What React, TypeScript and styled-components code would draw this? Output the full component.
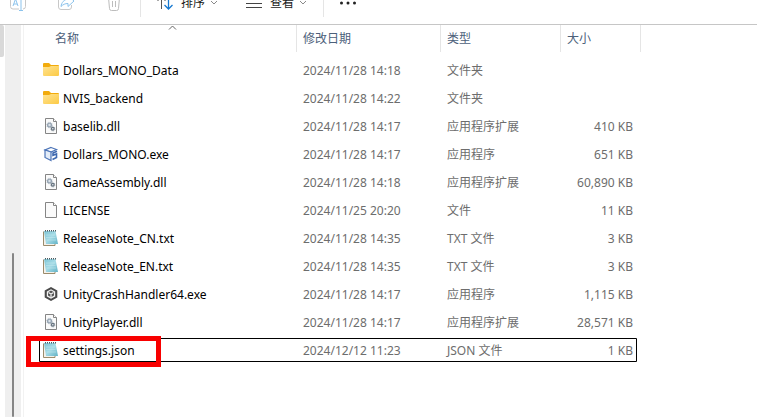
import React from 'react';
import styled, { createGlobalStyle, css } from 'styled-components';

const Global = createGlobalStyle`
  * { box-sizing: border-box; }
  body {
    margin: 0;
    background: #fff;
    color: #000;
    font: 12px/16px "Noto Sans", "Noto Sans CJK SC", sans-serif;
  }
  button { font: inherit; color: inherit; background: none; border: 0; padding: 0; }
  svg { display: block; flex: none; }
`;

const Page = styled.div`
  display: flex;
  flex-direction: column;
  height: 100vh;
  overflow: hidden;
`;

const Toolbar = styled.header`
  display: flex;
  align-items: flex-end;
  flex: none;
  height: 25px;
  overflow: hidden;
  border-bottom: 1px solid #c6c6c6;
`;

const Commands = styled.div`
  display: flex;
  align-items: center;
  flex: none;
  height: 42px;
  padding-left: 9px;
`;

const IconCommand = styled.button`
  width: 18px;
  height: 18px;
  margin-right: 30px;
`;

const Separator = styled.span<{ $before: number }>`
  width: 1px;
  height: 28px;
  margin-left: ${p => p.$before}px;
  margin-right: 15px;
  background: #e5e5e5;
`;

const MenuCommand = styled.button<{ $after?: number }>`
  display: flex;
  align-items: center;
  gap: 5px;
  margin-right: ${p => p.$after ?? 0}px;
  white-space: nowrap;
  color: #1a1a1a;
`;

const CommandLabel = styled.span`
  padding-left: 2px;
`;

const Body = styled.div`
  display: flex;
  flex: 1;
  min-height: 0;
`;

const Nav = styled.aside`
  display: flex;
  flex: none;
  width: 24px;
  border-right: 1px solid #f2f2f2;
`;

const NavItem = styled.div`
  flex: none;
  width: 4px;
  height: 32px;
  margin-right: 1px;
  border-radius: 0 2px 2px 0;
  background: #d9d9d9;
`;

const Track = styled.div`
  width: 16px;
  padding: 228px 7px 0;
  background: #efefef;
`;

const Thumb = styled.div`
  width: 2px;
  height: 100%;
  border-radius: 1px;
  background: #858585;
`;

const Content = styled.main`
  flex: 1;
  min-width: 0;
  padding-left: 15px;
`;

const Files = styled.table`
  display: block;
`;

const Section = styled.tbody`
  display: block;
  padding-top: 6px;
`;

const Head = styled.thead`
  display: block;
`;

const columns = css`
  display: grid;
  grid-template-columns: 258px 144px 120px 80px;
  align-items: center;
`;

const HeadRow = styled.tr`
  ${columns}
`;

const HeadCell = styled.th`
  position: relative;
  height: 27px;
  padding: 6px 0 0 6px;
  border-right: 1px solid #e5e5e5;
  text-align: left;
  font-weight: 400;
  color: #4c607a;
  &:first-child { padding-left: 16px; }
`;

const SortMark = styled.svg`
  position: absolute;
  top: 0;
  left: 129px;
`;

const FileRow = styled.tr<{ $focused?: boolean }>`
  ${columns}
  position: relative;
  width: 598px;
  height: 24px;
  margin-bottom: 4px;
  box-shadow: ${p => (p.$focused ? 'inset 0 0 0 1px #000' : 'none')};
  border-radius: 1px;
`;

const NameCell = styled.td`
  display: flex;
  align-items: center;
  gap: 4px;
  padding: 0 0 0 4px;
  white-space: nowrap;
`;

const FileName = styled.span`
  padding-top: 2px;
`;

const Cell = styled.td`
  padding: 2px 0 0 6px;
  color: #6d6d6d;
  white-space: nowrap;
`;

const SizeCell = styled(Cell)`
  width: 76px;
  padding: 2px 4px 0 0;
  text-align: right;
`;

const Highlight = styled.span`
  position: absolute;
  top: -2px;
  left: -13px;
  width: 135px;
  height: 31px;
  border: 5px solid #f80000;
  pointer-events: none;
`;

type Kind = 'folder' | 'dll' | 'mono' | 'blank' | 'text' | 'unity';

const Sheet = () => (
  <>
    <path d="M2.5.5h8l3 3v12h-11z" fill="#fafafa" stroke="#858585" />
    <path d="M10.5.5v3h3" fill="#fff" stroke="#858585" />
  </>
);

const FileIcon = ({ kind }: { kind: Kind }) => (
  <svg width="16" height="16" viewBox="0 0 16 16" aria-hidden="true">
    {kind === 'folder' && (
      <>
        <defs>
          <linearGradient id="folder" x1="0" y1="0" x2="1" y2="1">
            <stop offset="0" stopColor="#ffe391" />
            <stop offset="1" stopColor="#fcca45" />
          </linearGradient>
        </defs>
        <path d="M0 2a1 1 0 0 1 1-1h5l2 2h7a1 1 0 0 1 1 1v4H0z" fill="#f2ab0c" />
        <path d="M0 5h6l2-1h8v9a1 1 0 0 1-1 1H1a1 1 0 0 1-1-1z" fill="url(#folder)" />
      </>
    )}
    {kind === 'blank' && <Sheet />}
    {kind === 'dll' && (
      <>
        <Sheet />
        <circle cx="6.500" cy="7" r="1.900" fill="#dce3ea" stroke="#97a5b3" strokeWidth="1.400" />
        <circle cx="6.500" cy="7" r="2.800" fill="none" stroke="#97a5b3" strokeWidth=".7" strokeDasharray="1 1.200" />
        <circle cx="9.800" cy="10.800" r="1.400" fill="#e8ecf0" stroke="#66737f" strokeWidth="1.200" />
        <circle cx="9.800" cy="10.800" r="2.200" fill="none" stroke="#66737f" strokeWidth=".6" strokeDasharray=".8 1" />
      </>
    )}
    {kind === 'mono' && (
      <>
        <path d="M8 1.500l5.500 2L8 6 2 4z" fill="#fff" stroke="#4d75b8" strokeWidth="1.200" />
        <path d="M2 4v7.500L8 14.500V6z" fill="#e3ecf8" stroke="#4d75b8" strokeWidth="1.200" />
        <path d="M14 5.200L10 7v2.300L13.500 8v3.500L9.500 13.500" fill="none" stroke="#3f69b0" strokeWidth="1.600" />
      </>
    )}
    {kind === 'text' && (
      <>
        <defs>
          <linearGradient id="note" x1="0" y1="0" x2="1" y2="1">
            <stop offset="0" stopColor="#7ec4d4" />
            <stop offset=".5" stopColor="#a6dbe6" />
            <stop offset="1" stopColor="#62b2c6" />
          </linearGradient>
        </defs>
        <path d="M.5 1.500v14H12V14" fill="#f4f1ea" stroke="#9b8b6b" />
        <path d="M1 1h11.500l2.500 13H3z" fill="url(#note)" />
        <path d="M3 5h9M3 7.500h9.500M3.500 10h9.500" stroke="#c4e8ef" strokeWidth=".5" />
        <path d="M2 .8h11" stroke="#4d5b61" strokeWidth="1.500" strokeDasharray="1 1" />
      </>
    )}
    {kind === 'unity' && (
      <>
        <path d="M8 1l6.300 3.400v7.200L8 15l-6.300-3.400V4.400z" fill="#4a4a4a" />
        <path d="M8 3.200l4.200 2.400v4.800L8 12.800l-4.200-2.400V5.600z" fill="#f2f2f2" />
        <path d="M8 4.500l3 1.800v3.200L8 11.300 5 9.500V6.300z" fill="#555" />
        <path d="M5.500 6.500L8 8l2.500-1.500M8 8v3" fill="none" stroke="#f2f2f2" strokeWidth="1.200" />
      </>
    )}
  </svg>
);

const Chevron = () => (
  <svg width="8" height="6" viewBox="0 0 8 6" fill="none" stroke="#8a8a8a" aria-hidden="true">
    <path d="M1 1l3 3 3-3" />
  </svg>
);

const files: { name: string; kind: Kind; date: string; type: string; size?: string; focused?: boolean }[] = [
  { name: 'Dollars_MONO_Data', kind: 'folder', date: '2024/11/28 14:18', type: '文件夹' },
  { name: 'NVIS_backend', kind: 'folder', date: '2024/11/28 14:22', type: '文件夹' },
  { name: 'baselib.dll', kind: 'dll', date: '2024/11/28 14:17', type: '应用程序扩展', size: '410 KB' },
  { name: 'Dollars_MONO.exe', kind: 'mono', date: '2024/11/28 14:17', type: '应用程序', size: '651 KB' },
  { name: 'GameAssembly.dll', kind: 'dll', date: '2024/11/28 14:18', type: '应用程序扩展', size: '60,890 KB' },
  { name: 'LICENSE', kind: 'blank', date: '2024/11/25 20:20', type: '文件', size: '11 KB' },
  { name: 'ReleaseNote_CN.txt', kind: 'text', date: '2024/11/28 14:35', type: 'TXT 文件', size: '3 KB' },
  { name: 'ReleaseNote_EN.txt', kind: 'text', date: '2024/11/28 14:35', type: 'TXT 文件', size: '3 KB' },
  { name: 'UnityCrashHandler64.exe', kind: 'unity', date: '2024/11/28 14:17', type: '应用程序', size: '1,115 KB' },
  { name: 'UnityPlayer.dll', kind: 'dll', date: '2024/11/28 14:17', type: '应用程序扩展', size: '28,571 KB' },
  { name: 'settings.json', kind: 'text', date: '2024/12/12 11:23', type: 'JSON 文件', size: '1 KB', focused: true },
];

export default function App() {
  return (
    <Page>
      <Global />
      <Toolbar>
        <Commands>
          <IconCommand aria-label="重命名" disabled>
            <svg width="18" height="18" viewBox="0 0 18 18" fill="none">
              <path d="M10 3H4a2.500 2.500 0 0 0-2.500 2.500v7A2.500 2.500 0 0 0 4 15h6M14 3a2.500 2.500 0 0 1 2.500 2.500v7A2.500 2.500 0 0 1 14 15" stroke="#c8c8c8" />
              <path d="M12 1v16M10 .5h4M10 16.500h4M4 12l2.500-7L9 12M5 10h3" stroke="#8cc3ec" />
            </svg>
          </IconCommand>
          <IconCommand aria-label="共享" disabled>
            <svg width="18" height="18" viewBox="0 0 18 18" fill="none">
              <path d="M6 3H4a2.500 2.500 0 0 0-2.500 2.500V13A2.500 2.500 0 0 0 4 15.500h8a2.500 2.500 0 0 0 2.500-2.500v-2" stroke="#c8c8c8" />
              <path d="M11 1.500L17 7l-6 5.500v-3c-3 0-5 1-7 3 .5-4 3-7 7-7.500z" stroke="#8cc3ec" />
            </svg>
          </IconCommand>
          <IconCommand aria-label="删除" disabled>
            <svg width="18" height="18" viewBox="0 0 18 18" fill="none" stroke="#bdbdbd">
              <path d="M2 3.500h14M6.500 3.500a2.500 2.500 0 0 1 5 0M3.500 3.500l1 11a2 2 0 0 0 2 2h5a2 2 0 0 0 2-2l1-11M7.500 7v6M10.500 7v6" />
            </svg>
          </IconCommand>
          <Separator $before={-13} />
          <MenuCommand $after={27}>
            <svg width="18" height="18" viewBox="0 0 18 18" fill="none">
              <path d="M5.500 15V3M1.500 7l4-4 4 4" stroke="#555" />
              <path d="M12.500 2v13M8.500 11l4 4 4-4" stroke="#1678d0" strokeWidth="1.300" />
            </svg>
            <CommandLabel>排序</CommandLabel>
            <Chevron />
          </MenuCommand>
          <MenuCommand>
            <svg width="18" height="18" viewBox="0 0 18 18" stroke="#444">
              <path d="M1 4.500h16M1 9.500h16M1 13.500h16" />
            </svg>
            <CommandLabel>查看</CommandLabel>
            <Chevron />
          </MenuCommand>
          <Separator $before={16} />
          <MenuCommand aria-label="更多">
            <svg width="18" height="18" viewBox="0 0 18 18" fill="#222">
              <circle cx="2.500" cy="9" r="1.500" />
              <circle cx="9" cy="9" r="1.500" />
              <circle cx="15.500" cy="9" r="1.500" />
            </svg>
          </MenuCommand>
        </Commands>
      </Toolbar>
      <Body>
        <Nav>
          <NavItem />
          <Track>
            <Thumb />
          </Track>
        </Nav>
        <Content>
          <Files>
            <Head>
              <HeadRow>
                <HeadCell scope="col">
                  名称
                  <SortMark width="9" height="6" viewBox="0 0 9 6" fill="none" stroke="#666">
                    <path d="M1 4.500l3.500-3.500L8 4.500" />
                  </SortMark>
                </HeadCell>
                <HeadCell scope="col">修改日期</HeadCell>
                <HeadCell scope="col">类型</HeadCell>
                <HeadCell scope="col">大小</HeadCell>
              </HeadRow>
            </Head>
            <Section>
              {files.map(f => (
                <FileRow key={f.name} $focused={f.focused}>
                  <NameCell>
                    <FileIcon kind={f.kind} />
                    <FileName>{f.name}</FileName>
                  </NameCell>
                  <Cell>{f.date}</Cell>
                  <Cell>{f.type}</Cell>
                  <SizeCell>
                    {f.size}
                    {f.focused && <Highlight />}
                  </SizeCell>
                </FileRow>
              ))}
            </Section>
          </Files>
        </Content>
      </Body>
    </Page>
  );
}
